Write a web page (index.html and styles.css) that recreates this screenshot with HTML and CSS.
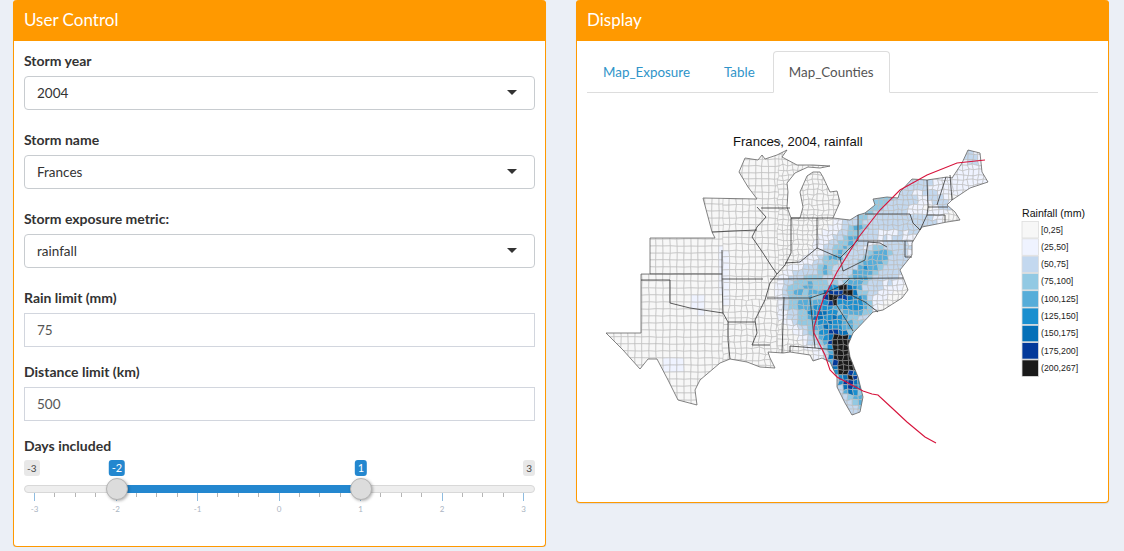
FILE: index.html
```html
<!DOCTYPE html>
<html lang="en">

<head>
    <meta charset="UTF-8">
    <meta name="viewport" content="width=device-width, initial-scale=1.0">
    <title>Storm exposure</title>
    <link rel="stylesheet" href="styles.css">
</head>

<body>
    <div class="page">
        <section class="box box-left">
            <h3 class="box-title">User Control</h3>
            <div class="box-body">
                <div class="field field-select">
                    <label>Storm year</label>
                    <div class="select">2004</div>
                </div>
                <div class="field field-select">
                    <label>Storm name</label>
                    <div class="select">Frances</div>
                </div>
                <div class="field field-select">
                    <label>Storm exposure metric:</label>
                    <div class="select">rainfall</div>
                </div>
                <div class="field">
                    <label>Rain limit (mm)</label>
                    <div class="input">75</div>
                </div>
                <div class="field">
                    <label>Distance limit (km)</label>
                    <div class="input">500</div>
                </div>
                <div class="field">
                    <label>Days included</label>
                    <div class="slider">
                        <div class="slider-top">
                            <span class="tag">-3</span>
                            <span class="tag">3</span>
                            <span class="tag tag-from">-2</span>
                            <span class="tag tag-to">1</span>
                        </div>
                        <div class="track">
                            <div class="track-fill"></div>
                            <div class="handle handle-from"></div>
                            <div class="handle handle-to"></div>
                        </div>
                        <div class="ticks">
                            <i class="major"></i><i></i><i></i><i></i>
                            <i class="major"></i><i></i><i></i><i></i>
                            <i class="major"></i><i></i><i></i><i></i>
                            <i class="major"></i><i></i><i></i><i></i>
                            <i class="major"></i><i></i><i></i><i></i>
                            <i class="major"></i><i></i><i></i><i></i>
                            <i class="major"></i>
                        </div>
                        <div class="tick-labels">
                            <span>-3</span><span>-2</span><span>-1</span><span>0</span><span>1</span><span>2</span><span>3</span>
                        </div>
                    </div>
                </div>
            </div>
        </section>

        <section class="box box-right">
            <h3 class="box-title">Display</h3>
            <div class="box-body">
                <ul class="tabs">
                    <li><a href="#">Map_Exposure</a></li>
                    <li><a href="#">Table</a></li>
                    <li class="active"><a href="#">Map_Counties</a></li>
                </ul>
                <svg class="map" id="map" viewBox="587 93 511 400" xmlns="http://www.w3.org/2000/svg">
                    <defs>
                        <clipPath id="land">
                            <path id="land-shape" d="M650 238L715 238 712 232 703 198 757 199 748 187 739 172 745 158 758 160 762 155 765 159 777 155 787 150 782 157 797 165 813 165 830 166 820 168 808 167 795 173 787 183 788 192 787 207 791 218 800 218 803 207 800 192 807 176 813 172 820 172 823 177 830 192 837 191 840 202 833 218 850 220 858 215 865 213 875 205 873 199 887 197 898 198 900 192 912 179 927 180 947 177 952 178 962 163 968 150 980 153 982 172 988 182 970 188 952 200 947 205 955 212 960 220 947 222 922 227 918 233 912 243 912 255 900 270 903 277 908 290 902 298 883 310 873 312 853 333 848 345 850 357 858 377 863 397 860 412 852 415 845 403 837 387 837 377 830 362 822 358 813 361 810 355 790 352 783 353 768 352 770 358 775 368 760 367 747 362 730 359 720 363 700 380 695 390 697 405 678 400 668 380 657 359 648 359 640 369 623 350 606 333 641 333 641 280 641 274 650 274Z" />
                        </clipPath>
                    </defs>
                    <g id="counties" clip-path="url(#land)"></g>
                    <use href="#land-shape" class="coast" />
                    <path class="states" d="M650 274L722 274M722 250L722 279 723 313 728 322 728 340 730 359M641 280L670 280 670 303 690 308 723 313M722 279L763 279M712 232L757 230M728 322L755 322M757 207L766 217 757 227 752 237 763 253 772 267 777 274 770 283 765 300 755 320 757 333 752 345 770 345M761 208L790 208M791 218L833 218M791 218L791 253 785 265 777 274M817 218L817 248M785 263L800 262 817 248 833 255 840 258 858 240 858 215M858 241L913 241M865 214L910 214 913 223 920 230M840 258L843 271 865 260 868 242 880 243 887 247M770 279L903 278M767 298L810 298 825 293 843 285 850 278M810 298L815 348 837 350M832 298L853 331M784 297L782 353M790 346L815 348M790 346L790 352M832 298L847 293 865 302 878 312M927 180L928 207 927 215 920 230M928 207L948 207M927 215L945 215 945 222M937 205L946 177M952 200L950 175M905 241L905 257 912 257" />
                    <path class="isle" d="M772 141L781 142" />
                    <path class="track-line" d="M936 443L925 437 907 422 892 408 878 395 872 394 863 391 837 377 830 370 825 355 814 333 814 327 817 317 823 300 837 272 858 238 880 210 900 190 927 175 957 163 985 160" />
                    <text class="map-title" x="733" y="146">Frances, 2004, rainfall</text>
                    <text class="legend-title" x="1022" y="216.5">Rainfall (mm)</text>
                    <g id="legend"></g>
                </svg>
            </div>
        </section>
    </div>
    <script src="map.js"></script>
</body>

</html>
```

FILE: styles.css
```css
* {
    box-sizing: border-box;
}

body {
    margin: 0;
    background-color: #ebeff6;
    font-family: "Lato", "Noto Sans", sans-serif;
    font-size: 14px;
    color: #333;
}

.page {
    display: grid;
    grid-template-columns: 533px 533px;
    column-gap: 30px;
    align-items: start;
    padding-left: 13px;
}

.box {
    background-color: #fff;
    border: 1px solid #f90;
    border-top: none;
    border-radius: 4px;
    box-shadow: 0 1px 1px rgba(0, 0, 0, 0.1);
}

.box-left {
    height: 547px;
}

.box-right {
    height: 503px;
}

.box-title {
    margin: 0 -1px;
    height: 41px;
    padding: 0 11px;
    background-color: #f90;
    border-radius: 4px 4px 0 0;
    color: #fff;
    font-size: 17px;
    font-weight: 400;
    line-height: 40px;
}

.box-body {
    padding: 10px 10px 0;
}

.field {
    margin-bottom: 15px;
}

.field-select {
    margin-bottom: 20px;
}

.field label {
    display: block;
    height: 25px;
    font-size: 14px;
    font-weight: 700;
    line-height: 20px;
}

.select {
    position: relative;
    height: 34px;
    padding-left: 12px;
    border: 1px solid #c8ccd0;
    border-radius: 4px;
    font-size: 13.5px;
    line-height: 33px;
}

.select::after {
    content: "";
    position: absolute;
    right: 17px;
    top: 13px;
    border-style: solid;
    border-width: 5px 5px 0;
    border-color: #333 transparent transparent;
}

.input {
    height: 34px;
    padding-left: 12px;
    border: 1px solid #d2d6de;
    color: #555;
    font-size: 13.5px;
    line-height: 33px;
}

.slider {
    margin-top: -1px;
}

.slider-top {
    position: relative;
    display: flex;
    justify-content: space-between;
    height: 16px;
}

.tag {
    padding: 0 3px;
    background-color: #e8e8e8;
    border-radius: 3px;
    color: #444;
    font-size: 10px;
    line-height: 16px;
}

.tag-from,
.tag-to {
    position: absolute;
    top: 0;
    background-color: #2387cf;
    color: #fff;
    font-size: 11px;
    transform: translateX(-50%);
}

.tag-from {
    left: 93px;
}

.tag-to {
    left: 337px;
}

.track {
    position: relative;
    height: 8px;
    margin-top: 9px;
    background-color: #eee;
    border: 1px solid #d8d8d8;
    border-radius: 4px;
}

.track-fill {
    position: absolute;
    left: 92px;
    width: 245px;
    top: -1px;
    bottom: -1px;
    background-color: #2387cf;
}

.handle {
    position: absolute;
    top: -8px;
    width: 22px;
    height: 22px;
    margin-left: -11px;
    background-color: #dcdcdc;
    border: 1px solid #b4b4b4;
    border-radius: 50%;
    box-shadow: 1px 1px 3px rgba(0, 0, 0, 0.3);
}

.handle-from {
    left: 92px;
}

.handle-to {
    left: 336px;
}

.ticks {
    display: flex;
    justify-content: space-between;
    align-items: flex-start;
    margin: 0 11px 0 10px;
}

.ticks i {
    width: 1px;
    height: 4px;
    background-color: #b5b5b5;
}

.ticks i.major {
    height: 8px;
    background-color: #8ebce0;
}

.tick-labels {
    display: flex;
    justify-content: space-between;
    margin: 2px 11px 0 10px;
}

.tick-labels span {
    width: 1px;
    display: flex;
    justify-content: center;
    color: #aab4c2;
    font-size: 8px;
    line-height: 12px;
}

.tabs {
    display: flex;
    height: 42px;
    margin: 0;
    padding: 0;
    list-style: none;
    border-bottom: 1px solid #ddd;
}

.tabs li {
    margin-right: 2px;
}

.tabs a {
    display: block;
    height: 42px;
    padding: 0 15px;
    border: 1px solid transparent;
    border-radius: 4px 4px 0 0;
    color: #2f94c9;
    font-size: 13.4px;
    line-height: 40px;
    text-decoration: none;
}

.tabs .active a {
    background-color: #fff;
    border-color: #ddd #ddd #fff;
    color: #555;
}

.map {
    display: block;
    width: 511px;
    height: 400px;
}

.coast {
    fill: none;
    stroke: #666;
    stroke-width: 0.8;
}

.states {
    fill: none;
    stroke: #333;
    stroke-width: 0.8;
}

.isle {
    fill: none;
    stroke: #444;
    stroke-width: 0.7;
}

.track-line {
    fill: none;
    stroke: #d7143c;
    stroke-width: 1.1;
}

.map-title {
    font-family: "Liberation Sans", sans-serif;
    font-size: 13.1px;
    fill: #111;
}

.legend-title {
    font-family: "Liberation Sans", sans-serif;
    font-size: 10.6px;
    fill: #111;
}

.legend-label {
    font-family: "Liberation Sans", sans-serif;
    font-size: 8.8px;
    fill: #222;
}
```

FILE: map.js
```js
const NS = 'http://www.w3.org/2000/svg';
const counties = document.getElementById('counties');
const legend = document.getElementById('legend');

const colors = ['#f7f7f7', '#eff3ff', '#c3d8ef', '#92c9e3', '#56add9', '#1a8fcf', '#0570b8', '#03399a', '#1a1a1a'];
const labels = ['[0,25]', '(25,50]', '(50,75]', '(75,100]', '(100,125]', '(125,150]', '(150,175]', '(175,200]', '(200,267]'];

// x1, y1, x2, y2, peak rainfall, spread
const bands = [
    [842, 346, 846, 364, 270, 15],
    [848, 372, 852, 384, 195, 13],
    [858, 395, 860, 404, 105, 8],
    [845, 385, 860, 412, 68, 18],
    [835, 335, 848, 345, 190, 12],
    [822, 312, 838, 340, 150, 20],
    [812, 298, 850, 340, 105, 34],
    [830, 299, 834, 300, 250, 6],
    [843, 289, 847, 291, 250, 6],
    [830, 296, 850, 292, 190, 11],
    [836, 296, 858, 305, 140, 16],
    [850, 288, 880, 255, 115, 13],
    [835, 292, 892, 258, 62, 34],
    [825, 270, 860, 228, 100, 11],
    [818, 282, 872, 214, 62, 28],
    [862, 216, 890, 196, 88, 10],
    [858, 216, 905, 195, 60, 22],
    [880, 218, 925, 226, 60, 18],
    [905, 188, 925, 184, 70, 9],
    [930, 195, 945, 205, 64, 9],
    [968, 155, 975, 160, 70, 7],
    [925, 180, 985, 170, 42, 24],
    [672, 365, 680, 362, 38, 9],
    [695, 300, 702, 308, 38, 8],
    [722, 252, 728, 300, 36, 7]
];

// fixed seed so the picture is the same on every load
let seed = 20;
function rnd() {
    seed = (seed * 16807) % 2147483647;
    return seed / 2147483647;
}

function distance(x, y, b) {
    const dx = b[2] - b[0];
    const dy = b[3] - b[1];
    const t = Math.max(0, Math.min(1, ((x - b[0]) * dx + (y - b[1]) * dy) / (dx * dx + dy * dy)));
    return Math.hypot(x - b[0] - t * dx, y - b[1] - t * dy);
}

function rainfall(x, y) {
    let value = 5;
    bands.forEach((b) => {
        const d = distance(x, y, b) / b[5];
        value = Math.max(value, b[4] * Math.exp(-d * d * d));
    });
    return value * (0.9 + rnd() * 0.2);
}

function addMesh(x0, x1, y0, y1, step, wobble) {
    const cols = Math.ceil((x1 - x0) / step);
    const rows = Math.ceil((y1 - y0) / step);
    const points = [];
    for (let i = 0; i <= cols; i++) {
        points[i] = [];
        for (let j = 0; j <= rows; j++) {
            points[i][j] = [x0 + i * step + (rnd() - 0.5) * wobble, y0 + j * step + (rnd() - 0.5) * wobble];
        }
    }
    for (let i = 0; i < cols; i++) {
        for (let j = 0; j < rows; j++) {
            const corners = [points[i][j], points[i + 1][j], points[i + 1][j + 1], points[i][j + 1]];
            const level = Math.min(8, Math.floor(rainfall(corners[0][0] + step / 2, corners[0][1] + step / 2) / 25));
            const cell = document.createElementNS(NS, 'polygon');
            cell.setAttribute('points', corners.map((c) => c.join(',')).join(' '));
            cell.setAttribute('fill', colors[level]);
            cell.setAttribute('stroke', level === 8 ? '#888' : '#bbb');
            cell.setAttribute('stroke-width', '0.6');
            counties.appendChild(cell);
        }
    }
}

addMesh(600, 723, 190, 420, 7, 0.7);
addMesh(723, 778, 140, 300, 6.5, 1.2);
addMesh(723, 778, 300, 380, 6, 2);
addMesh(778, 1000, 140, 420, 5, 2.2);

colors.forEach((color, i) => {
    const y = 221.5 + i * 17.3;
    const square = document.createElementNS(NS, 'rect');
    square.setAttribute('x', 1022);
    square.setAttribute('y', y);
    square.setAttribute('width', 16.5);
    square.setAttribute('height', 16.5);
    square.setAttribute('fill', color);
    square.setAttribute('stroke', '#ddd');
    square.setAttribute('stroke-width', '0.8');
    legend.appendChild(square);

    const label = document.createElementNS(NS, 'text');
    label.setAttribute('class', 'legend-label');
    label.setAttribute('x', 1041);
    label.setAttribute('y', y + 11);
    label.textContent = labels[i];
    legend.appendChild(label);
});
```
